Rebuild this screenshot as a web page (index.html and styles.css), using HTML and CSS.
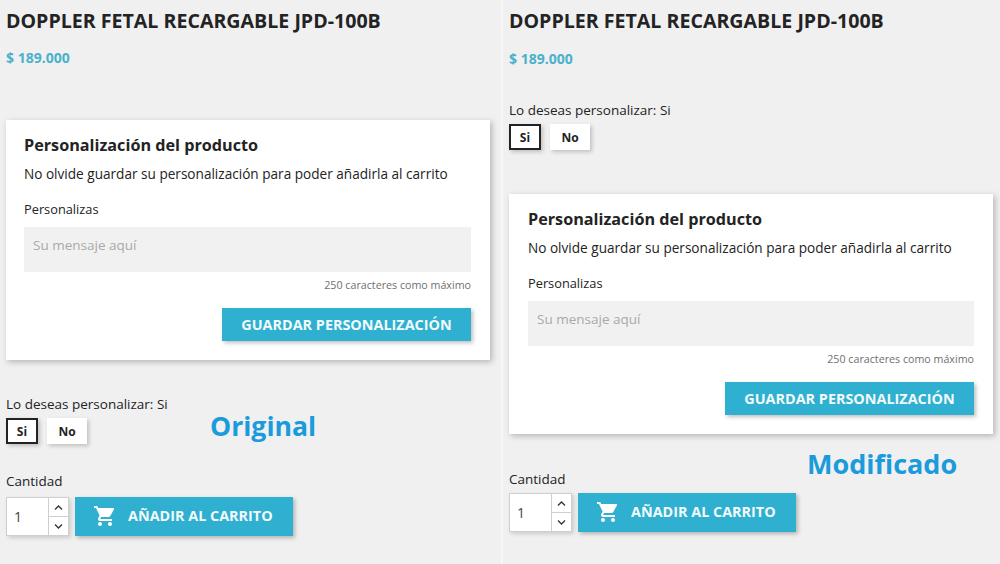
FILE: index.html
```html
<!DOCTYPE html>
<html lang="en">
<head>
  <meta charset="UTF-8" />
  <title>Original / Modificado</title>
  <link rel="stylesheet" href="styles.css">
</head>
<body>
  <div class="compare">
    <!-- Original -->
    <section class="col col-left">
      <h1 class="title">DOPPLER FETAL RECARGABLE JPD-100B</h1>
      <div class="price">$ 189.000</div>

      <div class="card card-left">
        <h2 class="card-title">Personalización del producto</h2>
        <p class="card-text">No olvide guardar su personalización para poder añadirla al carrito</p>
        <label class="field-label">Personalizas</label>
        <div class="textarea">Su mensaje aquí</div>
        <small class="hint">250 caracteres como máximo</small>
        <div class="save-row"><button class="btn btn-save">GUARDAR PERSONALIZACIÓN</button></div>
      </div>

      <div class="option option-left">
        <div class="option-label">Lo deseas personalizar: Si</div>
        <div class="option-buttons">
          <button class="choice selected">Si</button>
          <button class="choice">No</button>
        </div>
      </div>

      <div class="qty-label qty-label-left">Cantidad</div>
      <div class="buy-row">
        <div class="qty">
          <span class="qty-value">1</span>
          <span class="qty-arrows">
            <span class="arrow"><svg width="9" height="5" viewBox="0 0 9 5"><path d="M1 4.500l3.500-3.500 3.500 3.500" fill="none" stroke="#333" stroke-width="1.300"/></svg></span>
            <span class="arrow"><svg width="9" height="5" viewBox="0 0 9 5"><path d="M1 .5l3.500 3.500 3.500-3.500" fill="none" stroke="#333" stroke-width="1.300"/></svg></span>
          </span>
        </div>
        <button class="btn btn-add">
          <svg class="cart" width="24" height="24" viewBox="0 0 24 24"><path fill="#fff" d="M7 18c-1.100 0-2 .9-2 2s.9 2 2 2 2-.9 2-2-.9-2-2-2zM1 2v2h2l3.600 7.590-1.350 2.450c-.16.28-.25.61-.25.96 0 1.100.9 2 2 2h12v-2H7.420c-.14 0-.25-.11-.25-.25l.03-.12.9-1.630h7.450c.75 0 1.410-.41 1.750-1.030l3.580-6.490A1 1 0 0 0 20 4H5.210l-.94-2H1zm16 16c-1.100 0-2 .9-2 2s.9 2 2 2 2-.9 2-2-.9-2-2-2z"/></svg>
          AÑADIR AL CARRITO
        </button>
      </div>
      <div class="tag tag-original">Original</div>
    </section>

    <!-- Modificado -->
    <section class="col col-right">
      <h1 class="title">DOPPLER FETAL RECARGABLE JPD-100B</h1>
      <div class="price">$ 189.000</div>

      <div class="option option-right">
        <div class="option-label">Lo deseas personalizar: Si</div>
        <div class="option-buttons">
          <button class="choice selected">Si</button>
          <button class="choice">No</button>
        </div>
      </div>

      <div class="card card-right">
        <h2 class="card-title">Personalización del producto</h2>
        <p class="card-text">No olvide guardar su personalización para poder añadirla al carrito</p>
        <label class="field-label">Personalizas</label>
        <div class="textarea">Su mensaje aquí</div>
        <small class="hint">250 caracteres como máximo</small>
        <div class="save-row"><button class="btn btn-save">GUARDAR PERSONALIZACIÓN</button></div>
      </div>

      <div class="qty-label qty-label-right">Cantidad</div>
      <div class="buy-row">
        <div class="qty">
          <span class="qty-value">1</span>
          <span class="qty-arrows">
            <span class="arrow"><svg width="9" height="5" viewBox="0 0 9 5"><path d="M1 4.500l3.500-3.500 3.500 3.500" fill="none" stroke="#333" stroke-width="1.300"/></svg></span>
            <span class="arrow"><svg width="9" height="5" viewBox="0 0 9 5"><path d="M1 .5l3.500 3.500 3.500-3.500" fill="none" stroke="#333" stroke-width="1.300"/></svg></span>
          </span>
        </div>
        <button class="btn btn-add">
          <svg class="cart" width="24" height="24" viewBox="0 0 24 24"><path fill="#fff" d="M7 18c-1.100 0-2 .9-2 2s.9 2 2 2 2-.9 2-2-.9-2-2-2zM1 2v2h2l3.600 7.590-1.350 2.450c-.16.28-.25.61-.25.96 0 1.100.9 2 2 2h12v-2H7.420c-.14 0-.25-.11-.25-.25l.03-.12.9-1.630h7.450c.75 0 1.410-.41 1.750-1.030l3.580-6.490A1 1 0 0 0 20 4H5.210l-.94-2H1zm16 16c-1.100 0-2 .9-2 2s.9 2 2 2 2-.9 2-2-.9-2-2-2z"/></svg>
          AÑADIR AL CARRITO
        </button>
      </div>
      <div class="tag tag-modificado">Modificado</div>
    </section>
  </div>
</body>
</html>
```

FILE: styles.css
```css
* {
  box-sizing: border-box;
}
html, body {
  margin: 0;
  height: 100%;
  overflow: hidden;
}
body {
  font-family: "Open Sans", "Noto Sans", sans-serif;
  color: #232323;
  background-color: #f0f0f1;
}
.compare {
  display: flex;
  height: 564px;
}
.col {
  position: relative;
  padding-left: 6px;
}
.col-left {
  width: 503px;
  padding-right: 11px;
  border-right: 2px solid #f7f7f7;
}
.col-right {
  width: 497px;
  padding-right: 7px;
}
.title {
  margin: 9px 0 0;
  font-size: 19.6px;
  line-height: 24px;
  font-weight: 700;
}
.price {
  margin-top: 15px;
  font-size: 14px;
  line-height: 20px;
  font-weight: 700;
  color: #4bb1cb;
}
.col-right .price {
  margin-top: 16px;
}

/* card */
.card {
  padding: 13px 19px 19px 18px;
  background: #fff;
  box-shadow: 2px 2px 6px rgba(0,0,0,0.25);
}
.card-left {
  margin-top: 52px;
}
.card-right {
  margin-top: 44px;
  padding-left: 19px;
}
.card-title {
  margin: 0;
  font-size: 16.2px;
  line-height: 24px;
  font-weight: 700;
}
.card-text {
  margin: 7px 0 0;
  font-size: 13.6px;
  line-height: 20px;
}
.field-label {
  display: block;
  margin-top: 16px;
  font-size: 12.8px;
  line-height: 18px;
}
.textarea {
  height: 45px;
  margin-top: 9px;
  padding: 8px 9px;
  font-size: 13.5px;
  line-height: 20px;
  color: #a9a9a9;
  background: #f1f1f1;
}
.hint {
  display: block;
  margin-top: 5px;
  font-size: 10.7px;
  line-height: 16px;
  text-align: right;
  color: #6f6f6f;
}
.save-row {
  display: flex;
  justify-content: flex-end;
  margin-top: 15px;
}

/* buttons */
.btn {
  border: 0;
  font-family: inherit;
  font-weight: 700;
  font-size: 14.4px;
  color: #f2fafc;
  background: #2fb0d0;
  box-shadow: 2px 2px 4px rgba(0,0,0,0.25);
}
.btn-save {
  width: 249px;
  height: 33px;
  padding: 0;
}
.btn-add {
  display: flex;
  align-items: center;
  width: 218px;
  height: 39px;
  padding: 0 0 2px 18px;
}
.cart {
  margin-right: 11px;
}

/* si / no */
.option-left {
  margin-top: 35px;
}
.option-right {
  margin-top: 32px;
}
.option-label {
  font-size: 13.5px;
  line-height: 18px;
}
.option-buttons {
  display: flex;
  gap: 9px;
  margin-top: 5px;
}
.choice {
  width: 40px;
  height: 26px;
  padding: 0;
  border: 0;
  font-family: inherit;
  font-size: 12px;
  font-weight: 700;
  color: #232323;
  background: #fff;
  box-shadow: 2px 2px 4px rgba(0,0,0,0.2);
}
.choice.selected {
  width: 32px;
  border: 2px solid #232323;
}

/* quantity */
.qty-label {
  font-size: 13.5px;
  line-height: 20px;
}
.qty-label-left {
  margin-top: 27px;
}
.qty-label-right {
  margin-top: 35px;
}
.buy-row {
  display: flex;
  gap: 6px;
  margin-top: 6px;
}
.col-right .buy-row {
  margin-top: 4px;
}
.qty {
  display: flex;
  width: 63px;
  height: 39px;
  background: #fff;
  border: 1px solid #cfcfcf;
  box-shadow: 2px 2px 4px rgba(0,0,0,0.15);
}
.qty-value {
  flex: 1;
  padding-left: 7px;
  font-size: 14px;
  line-height: 37px;
  color: #444;
}
.qty-arrows {
  display: flex;
  flex-direction: column;
  width: 20px;
  border-left: 1px solid #cfcfcf;
}
.arrow {
  flex: 1;
  display: flex;
  align-items: center;
  justify-content: center;
}
.arrow + .arrow {
  border-top: 1px solid #cfcfcf;
}

/* blue annotations sit over the page */
.tag {
  position: absolute;
  font-size: 27px;
  line-height: 36px;
  font-weight: 700;
  color: #1a9bdc;
}
.tag-original {
  left: 210px;
  top: 408px;
  font-size: 26.6px;
}
.tag-modificado {
  left: 304px;
  top: 446px;
}
```
